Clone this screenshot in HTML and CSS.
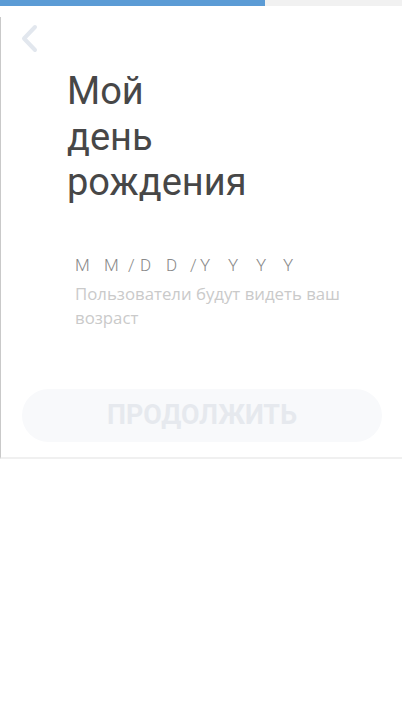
FILE: index.html
```html
<!DOCTYPE html>
<html lang="ru">
<head>
<meta charset="utf-8">
<title>Мой день рождения</title>
<link rel="stylesheet" href="styles.css">
</head>
<body>
<div class="progress">
  <div class="progress-fill"></div>
  <div class="progress-rest"></div>
</div>
<main class="screen">
  <button class="back" aria-label="Назад">
    <svg width="20" height="30" viewBox="0 0 20 30"><path d="M16 3 L5 14.5 L16 26" fill="none" stroke="#e2e7ee" stroke-width="4" stroke-linecap="round" stroke-linejoin="round"/></svg>
  </button>
  <section class="content">
    <h1 class="title">Мой<br>день<br>рождения</h1>
    <div class="date"><span class="ch w29">M</span><span class="ch w24">M</span><span class="ch w12">/</span><span class="ch w26">D</span><span class="ch w24">D</span><span class="ch w10">/</span><span class="ch w28">Y</span><span class="ch w28">Y</span><span class="ch w27">Y</span><span class="ch">Y</span></div>
    <p class="hint">Пользователи будут видеть ваш возраст</p>
  </section>
  <button class="continue">ПРОДОЛЖИТЬ</button>
</main>
</body>
</html>
```
FILE: styles.css
```css
html, body {
  margin: 0;
  padding: 0;
  background: #fff;
}
body {
  width: 402px;
  font-family: Roboto, "Noto Sans", sans-serif;
}
.progress {
  display: flex;
  height: 6px;
}
.progress-fill {
  width: 265px;
  background: #5b9bd5;
}
.progress-rest {
  flex: 1;
  background: #f1f1f1;
}
.screen {
  margin-top: 11px;
  height: 440px;
  border-left: 1.5px solid #c9c9c9;
  border-bottom: 2px solid #f0f0f0;
  display: flex;
  flex-direction: column;
}
.back {
  align-self: flex-start;
  margin: 7px 0 0 18px;
  padding: 0;
  border: 0;
  background: none;
  width: 20px;
  height: 30px;
}
.back svg { display: block; }
.content {
  padding: 0 0 0 66px;
}
.title {
  margin: 15px 0 0;
  font-weight: 400;
  font-size: 38px;
  line-height: 45.5px;
  color: #474747;
}
.date {
  display: flex;
  margin: 49px 0 0 8px;
  font-weight: 300;
  font-size: 17px;
  line-height: 20px;
  color: #8a8a8a;
}
.ch { display: block; }
.w10 { width: 10px; }
.w12 { width: 12px; }
.w24 { width: 24px; }
.w26 { width: 26px; }
.w27 { width: 27px; }
.w28 { width: 28px; }
.w29 { width: 29px; }
.hint {
  margin: 7px 0 0 8px;
  width: 300px;
  font-family: "Open Sans", sans-serif;
  font-size: 16.8px;
  line-height: 24px;
  color: #cacaca;
}
.continue {
  margin: 59px 0 0 21px;
  width: 360px;
  height: 53px;
  border: 0;
  border-radius: 27px;
  background: #f8f9fb;
  color: #e6e9ee;
  font-family: Roboto, sans-serif;
  font-weight: 700;
  font-size: 26.8px;
  padding: 0;
}
```
